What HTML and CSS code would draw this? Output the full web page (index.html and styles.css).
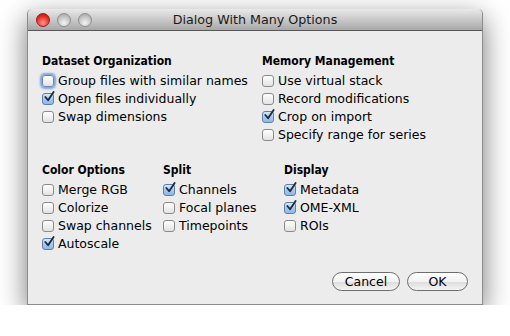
FILE: index.html
```html
<!DOCTYPE html>
<html lang="en">

<head>
  <meta charset="UTF-8" />
  <title>Dialog With Many Options</title>
  <link rel="stylesheet" href="styles.css">
</head>

<body>

  <div class="window">
    <!-- Barra de titulo -->
    <div class="titlebar">
      <div class="lights">
        <span class="light close"></span>
        <span class="light"></span>
        <span class="light"></span>
      </div>
      <div class="title">Dialog With Many Options</div>
    </div>

    <div class="content">
      <div class="section top">
        <div class="group">
          <div class="heading">Dataset Organization</div>
          <label class="option"><span class="box focus"></span>Group files with similar names</label>
          <label class="option"><span class="box checked"><svg viewBox="0 0 13 13"><path d="M2.5 6.5 L5.5 10 L11.5 1" /></svg></span>Open files individually</label>
          <label class="option"><span class="box"></span>Swap dimensions</label>
        </div>
        <div class="group">
          <div class="heading">Memory Management</div>
          <label class="option"><span class="box"></span>Use virtual stack</label>
          <label class="option"><span class="box"></span>Record modifications</label>
          <label class="option"><span class="box checked"><svg viewBox="0 0 13 13"><path d="M2.5 6.5 L5.5 10 L11.5 1" /></svg></span>Crop on import</label>
          <label class="option"><span class="box"></span>Specify range for series</label>
        </div>
      </div>

      <div class="section bottom">
        <div class="group">
          <div class="heading">Color Options</div>
          <label class="option"><span class="box"></span>Merge RGB</label>
          <label class="option"><span class="box"></span>Colorize</label>
          <label class="option"><span class="box"></span>Swap channels</label>
          <label class="option"><span class="box checked"><svg viewBox="0 0 13 13"><path d="M2.5 6.5 L5.5 10 L11.5 1" /></svg></span>Autoscale</label>
        </div>
        <div class="group">
          <div class="heading">Split</div>
          <label class="option"><span class="box checked"><svg viewBox="0 0 13 13"><path d="M2.5 6.5 L5.5 10 L11.5 1" /></svg></span>Channels</label>
          <label class="option"><span class="box"></span>Focal planes</label>
          <label class="option"><span class="box"></span>Timepoints</label>
        </div>
        <div class="group">
          <div class="heading">Display</div>
          <label class="option"><span class="box checked"><svg viewBox="0 0 13 13"><path d="M2.5 6.5 L5.5 10 L11.5 1" /></svg></span>Metadata</label>
          <label class="option"><span class="box checked"><svg viewBox="0 0 13 13"><path d="M2.5 6.5 L5.5 10 L11.5 1" /></svg></span>OME-XML</label>
          <label class="option"><span class="box"></span>ROIs</label>
        </div>
      </div>

      <div class="buttons">
        <button class="btn cancel">Cancel</button>
        <button class="btn ok">OK</button>
      </div>
    </div>
  </div>

</body>

</html>
```

FILE: styles.css
```css
* {
  box-sizing: border-box;
}

body {
  font-family: 'DejaVu Sans', 'Liberation Sans', sans-serif;
  font-size: 12.5px;
  color: #000;
  background: #fff;
  margin: 0;
  padding: 9px 0 0 27px;
}

.window {
  width: 456px;
  height: 296px;
  background: #ececec;
  border: 1px solid #8c8c8c;
  border-top: none;
  border-radius: 5px 5px 0 0;
  box-shadow: 0 9px 28px rgba(0, 0, 0, 0.55);
}

.titlebar {
  position: relative;
  height: 22px;
  background: linear-gradient(to bottom, #e9e9e9, #c9c9c9 50%, #a8a8a8);
  border-bottom: 1px solid #575757;
  border-radius: 5px 5px 0 0;
  display: flex;
  align-items: center;
  justify-content: center;
}

.lights {
  position: absolute;
  left: 8px;
  top: 4px;
  display: flex;
  gap: 7px;
}

.light {
  width: 14px;
  height: 14px;
  border-radius: 50%;
  border: 1px solid #8e8e8e;
  background: radial-gradient(circle at 50% 75%, #f4f4f4, #c2c2c2 60%, #9e9e9e);
}

.light.close {
  border-color: #9a1a1a;
  background: radial-gradient(circle at 50% 75%, #ff9a8e, #e8342a 55%, #a80e0e);
}

.title {
  font-size: 12.7px;
  color: #1a1a1a;
}

.content {
  padding: 21px 14px 0;
}

.section {
  display: grid;
}

.section.top {
  grid-template-columns: 220px 1fr;
  margin-bottom: 17px;
}

.section.bottom {
  grid-template-columns: 121px 121px 1fr;
}

.group {
  display: flex;
  flex-direction: column;
}

.heading {
  font-family: 'DejaVu Sans Condensed', 'DejaVu Sans', sans-serif;
  font-size: 12px;
  font-weight: bold;
  line-height: 18px;
  margin-bottom: 2px;
}

.option {
  display: flex;
  align-items: center;
  gap: 4px;
  line-height: 18px;
  height: 18px;
  white-space: nowrap;
}

.box {
  width: 12px;
  height: 12px;
  flex: none;
  position: relative;
  border: 1px solid #8a8a8a;
  border-radius: 3px;
  background: linear-gradient(to bottom, #ffffff, #e2e2e2);
}

.box.focus {
  border-color: #6a86b4;
  box-shadow: 0 0 2px 2px rgba(92, 140, 214, 0.75);
}

.box.checked {
  border-color: #5e7fa8;
  background: linear-gradient(to bottom, #d8e9fa, #a8caf0 50%, #8fb8e8);
}

.box svg {
  position: absolute;
  left: 0;
  top: -3px;
  width: 12px;
  height: 12px;
  overflow: visible;
}

.box svg path {
  fill: none;
  stroke: #1c2a3c;
  stroke-width: 2;
  stroke-linecap: round;
  stroke-linejoin: round;
}

.buttons {
  display: flex;
  justify-content: flex-end;
  gap: 7px;
  margin-top: 19px;
}

.btn {
  font-family: 'DejaVu Sans', 'Liberation Sans', sans-serif;
  font-size: 12.5px;
  height: 19px;
  padding: 0;
  border: 1px solid #6e6e6e;
  border-radius: 10px;
  background: linear-gradient(to bottom, #ffffff, #f2f2f2 50%, #dcdcdc 51%, #f4f4f4);
  color: #000;
}

.btn.cancel {
  width: 68px;
}

.btn.ok {
  width: 61px;
}
```
